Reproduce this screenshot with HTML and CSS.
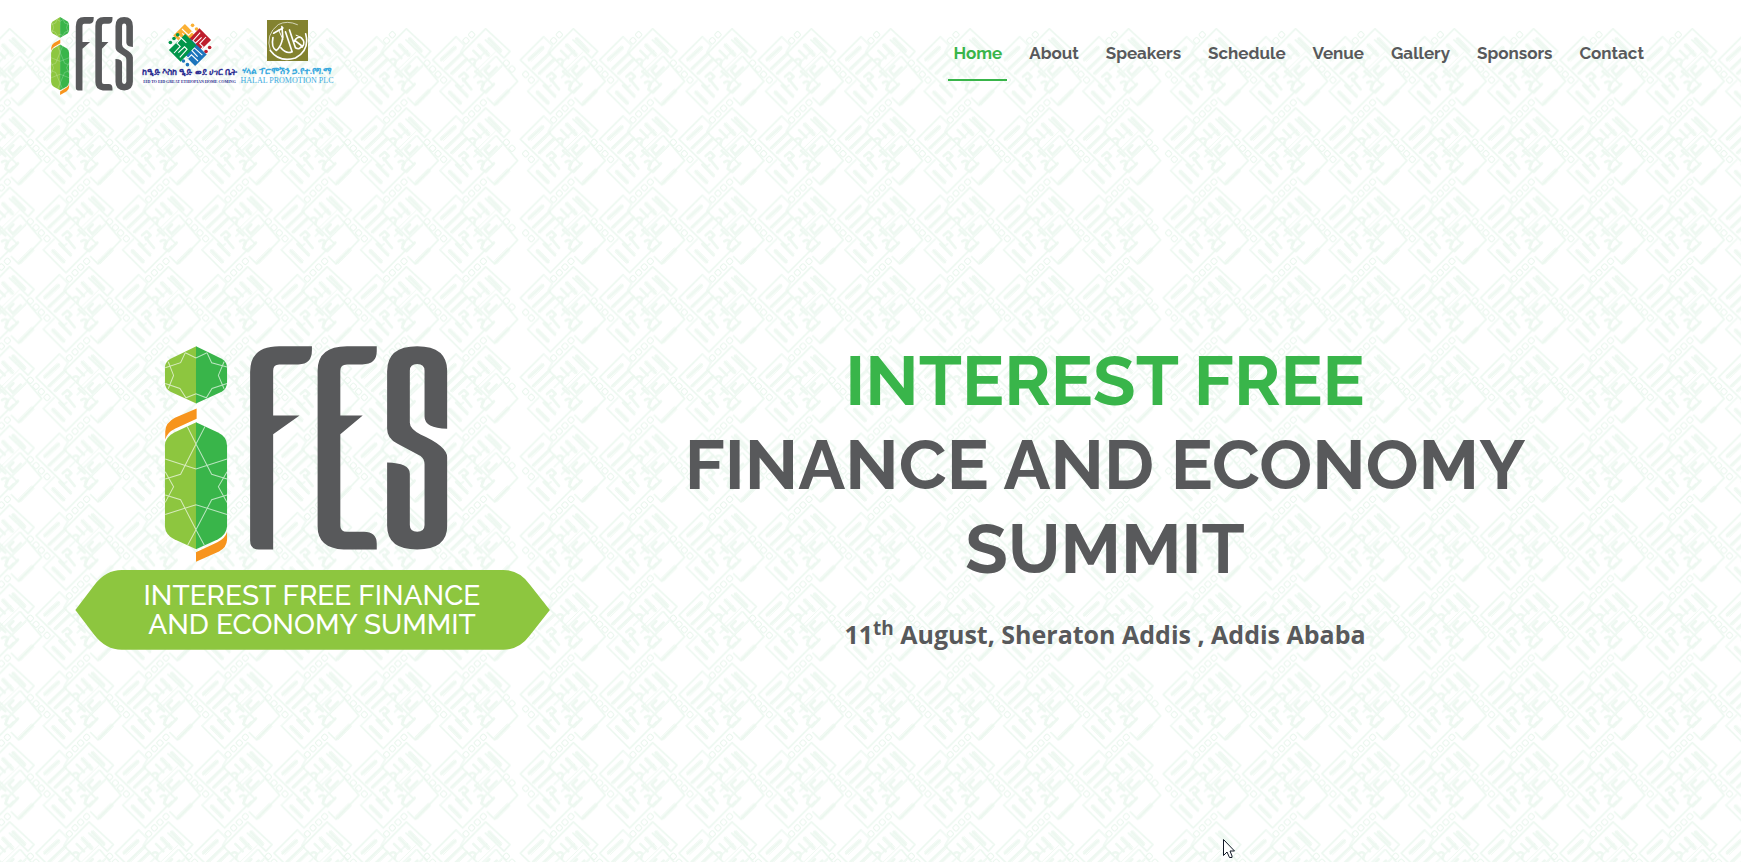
FILE: index.html
```html
<!DOCTYPE html>
<html lang="en">
<head>
<meta charset="utf-8">
<meta name="viewport" content="width=device-width, initial-scale=1">
<title>Interest Free Finance and Economy Summit</title>
<link rel="stylesheet" href="styles.css">
</head>
<body>
<svg class="backdrop" aria-hidden="true">
  <defs>
    <g id="motif" fill="none" stroke-linejoin="round" stroke-linecap="round">
      <g stroke="#f2faf5" stroke-width="6">
        <path d="M74 26L4 96L88 178L96 172M74 26L100 52L88 72M163 2L90 76L186 172M163 2L236 70L218 90L162 36"/>
        <path d="M196 86L259 160L190 232L168 210M26 190L94 258L174 178M26 190L58 158"/>
        <path d="M128 148L192 86M106 126L166 68M150 172L212 112"/>
      </g>
      <g stroke="#eef8f1" stroke-width="8">
        <path d="M72 58L30 96M172 32L208 70M54 192L88 226M232 188L192 228"/>
        <path d="M92 74L42 122M106 92L60 136M142 50L172 82M126 68L148 90M74 172L108 206M94 152L120 184"/>
        <path d="M114 98Q124 88 132 98L128 112M84 146L98 134L110 146L96 158M174 114L160 128L172 142L196 118M140 164Q150 156 158 166L150 184L164 194L188 168M132 130L150 146"/>
      </g>
      <g stroke="#e8f6ec" stroke-width="2">
        <path d="M74 26L4 96L88 178M163 2L90 76L186 172M163 2L236 70L218 90L162 36"/>
        <path d="M196 86L259 160L190 232L168 210M26 190L94 258L174 178"/>
        <path d="M76 62L36 100M68 54L26 92M176 28L212 66M168 36L202 72M58 188L92 222M50 196L84 230M236 192L196 232M228 184L188 224"/>
        <path d="M146 46L176 78M138 54L168 86M130 132L192 72M150 176L212 116M96 78L46 126M110 96L64 140M78 168L112 202"/>
      </g>
      <g stroke="#e9f6ed" stroke-width="3">
        <rect x="-8" y="-8" width="16" height="16" rx="4" transform="translate(121 20) rotate(45)"/>
        <rect x="-8" y="-8" width="16" height="16" rx="4" transform="translate(104 38) rotate(45)"/>
        <rect x="-8" y="-8" width="16" height="16" rx="4" transform="translate(225 105) rotate(45)"/>
        <rect x="-8" y="-8" width="16" height="16" rx="4" transform="translate(242 123) rotate(45)"/>
        <rect x="-8" y="-8" width="16" height="16" rx="4" transform="translate(20 139) rotate(45)"/>
        <rect x="-8" y="-8" width="16" height="16" rx="4" transform="translate(37 156) rotate(45)"/>
        <rect x="-8" y="-8" width="16" height="16" rx="4" transform="translate(156 224) rotate(45)"/>
        <rect x="-8" y="-8" width="16" height="16" rx="4" transform="translate(138 241) rotate(45)"/>
      </g>
    </g>
    <g id="motif-row">
      <use href="#motif"/><use href="#motif" x="238"/><use href="#motif" x="476"/><use href="#motif" x="714"/>
      <use href="#motif" x="952"/><use href="#motif" x="1190"/><use href="#motif" x="1428"/><use href="#motif" x="1666"/>
    </g>
    <pattern id="weave-top" patternUnits="userSpaceOnUse" width="1929" height="238" patternTransform="translate(519 28) scale(.3333)">
      <use href="#motif-row"/>
    </pattern>
    <pattern id="weave" patternUnits="userSpaceOnUse" width="1929" height="238" patternTransform="translate(519 28) scale(.3333)">
      <use href="#motif-row"/><use href="#motif-row" y="-238"/>
    </pattern>
  </defs>
  <rect y="28" width="100%" height="79" fill="url(#weave-top)"/>
  <rect y="107" width="100%" height="100%" fill="url(#weave)"/>
</svg>

<svg class="library" aria-hidden="true">
  <symbol id="ifes" viewBox="314 50 847 647" preserveAspectRatio="none">
    <path fill="#8dc63f" d="M409 51L332 88Q315 98 315 115V160Q315 177 332 187L409 222Z"/>
    <path fill="#39b54a" d="M408 51L485 88Q501 98 501 115V160Q501 177 485 187L408 222Z"/>
    <path fill="#f7941d" d="M410 237V268L345 298Q322 309 316 330V305Q317 280 345 265Z"/>
    <path fill="#8dc63f" d="M409 278L343 309Q315 324 315 348V590Q317 616 343 628L409 658Z"/>
    <path fill="#39b54a" d="M408 278L474 309Q501 322 501 348V590Q499 614 474 628L408 658Z"/>
    <path fill="#f7941d" d="M408 696V667L472 637Q495 627 501 607V630Q500 653 477 665Z"/>
    <g fill="none" stroke="#fff" stroke-opacity=".65" stroke-width="3">
      <path d="M376 70L408 86L441 70M376 70L362 100L316 115M441 70L455 100L501 113M325 97L341 138L325 178M492 97L475 138L492 178M316 162L360 177L378 205L408 193L439 205L456 177L501 162"/>
      <path d="M382 291L408 343L455 434L501 448M435 291L408 343L362 434L316 448M316 388L408 418L501 388M316 426L341 471L316 518M501 426L475 471L501 518M316 496L362 510L408 600L433 646M501 496L455 510L408 600L383 646M316 554L408 525L501 554"/>
    </g>
    <g fill="#58595b">
      <path d="M755 51V63Q755 105 715 105H657Q639 105 639 123V258H718L639 314V659H596Q570 659 570 632V128Q570 51 657 51Z"/>
      <path d="M949 51V66Q949 105 906 105H860Q840 105 840 124V258H907L840 314V588Q840 606 860 606H910Q949 606 949 642V659H850Q772 655 772 590V124Q772 51 860 51Z"/>
      <path d="M1160 298Q1092 296 1092 262V124Q1092 104 1070 104T1048 124V280Q1048 298 1080 315Q1160 350 1160 384V588Q1160 659 1070 659T980 588V399Q1048 401 1048 432V586Q1048 606 1070 606T1092 586V404Q1092 388 1080 379L1010 342Q980 327 980 298V126Q980 51 1070 51T1160 126Z"/>
    </g>
  </symbol>
  <symbol id="eid-block" viewBox="-66 -66 132 132" overflow="visible">
    <path d="M-46 -26L-14 -58L30 -13L-1 17Z"/>
    <circle cx="7" cy="-54" r="5"/><circle cx="18" cy="-44" r="5"/><circle cx="28" cy="-34" r="5"/>
    <path d="M-34 -28L-12 -8L-5 -15L-21 -32M-22 -44L-4 -27L5 -36L19 -24L6 -10" fill="none" stroke="#fff" stroke-width="3"/>
  </symbol>
</svg>

<header class="site-header">
  <a class="brand" href="#home" aria-label="iFES home">
    <svg class="brand-ifes" aria-hidden="true"><use href="#ifes"/></svg>
    <span class="partner partner-eid">
      <svg class="eid-mark" viewBox="-66 -66 132 132" aria-hidden="true">
        <use href="#eid-block" x="-66" y="-66" width="132" height="132" fill="#fbb034"/>
        <g transform="rotate(90)"><use href="#eid-block" x="-66" y="-66" width="132" height="132" fill="#be1e2d"/></g>
        <g transform="rotate(180)"><use href="#eid-block" x="-66" y="-66" width="132" height="132" fill="#1c75bc"/></g>
        <g transform="rotate(270)"><use href="#eid-block" x="-66" y="-66" width="132" height="132" fill="#00964a"/></g>
      </svg>
      <span class="partner-am" lang="am">ከዒድ እስከ ዒድ ወደ ሀገር ቤት</span>
      <span class="partner-en">EID TO EID GREAT ETHIOPIAN HOME COMING</span>
    </span>
    <span class="partner partner-halal">
      <svg class="halal-mark" viewBox="0 0 124 124" aria-hidden="true">
        <rect width="124" height="124" fill="#83822f"/>
        <g fill="none" stroke="#fff" stroke-linecap="round">
          <path stroke-width="5" d="M117 42Q130 92 86 115Q38 130 10 92"/>
          <path stroke-width="2" d="M10 92Q-6 44 34 14Q60 0 92 14"/>
          <path stroke-width="5" d="M18 53Q12 84 28 92Q42 84 48 52L45 20M20 40L48 24M56 36Q66 66 76 96Q58 104 42 84M68 30L86 84Q98 92 105 78L84 62Q92 48 104 54Q118 68 106 82"/>
          <path stroke-width="3" d="M35 30L48 58M88 46L102 52"/>
        </g>
      </svg>
      <span class="partner-am" lang="am">ሃላል ፕሮሞሽን ኃ.የተ.የግ.ማ</span>
      <span class="partner-en">HALAL PROMOTION PLC</span>
    </span>
  </a>
  <nav class="site-nav" aria-label="Main">
    <a class="active" href="#home" aria-current="page">Home</a>
    <a href="#about">About</a>
    <a href="#speakers">Speakers</a>
    <a href="#schedule">Schedule</a>
    <a href="#venue">Venue</a>
    <a href="#gallery">Gallery</a>
    <a href="#sponsors">Sponsors</a>
    <a href="#contact">Contact</a>
  </nav>
</header>

<main class="hero" id="home">
  <svg class="hero-logo" viewBox="46 50 1422 912" role="img" aria-label="iFES Interest Free Finance and Economy Summit">
    <use href="#ifes" x="314" y="50" width="847" height="647"/>
    <path fill="#8dc63f" d="M47 840L104 765Q138 720 186 720H1328Q1376 720 1408 765L1467 840L1408 915Q1376 959 1328 959H186Q138 959 104 915Z"/>
    <g class="ribbon-text">
      <text x="755" y="824">INTEREST FREE FINANCE</text>
      <text x="755" y="912">AND ECONOMY SUMMIT</text>
    </g>
  </svg>
  <div class="hero-text">
    <h1><span>INTEREST FREE</span><br>FINANCE AND ECONOMY SUMMIT</h1>
    <p>11<sup>th</sup> August, Sheraton Addis , Addis Ababa</p>
  </div>
</main>

<svg class="pointer" viewBox="0 0 12 19" aria-hidden="true">
  <path d="M.5 .5V16.500L4 13L6.500 18.500H9L9 17L7 12H11.500Z" fill="#fff" stroke="#111827"/>
</svg>
</body>
</html>
```
FILE: styles.css
```css
* {
  box-sizing: border-box;
}

body {
  margin: 0;
  min-height: 100vh;
  display: flex;
  flex-direction: column;
  position: relative;
  overflow: hidden;
  background: #fff;
  color: #58595b;
  font-family: "Open Sans", sans-serif;
}

.backdrop {
  position: absolute;
  inset: 0;
  width: 100%;
  height: 100%;
  z-index: -1;
}

.library {
  position: absolute;
  width: 0;
  height: 0;
}

.site-header {
  display: flex;
  justify-content: space-between;
  align-items: flex-start;
  padding: 17px 92px 0 51px;
}

.brand {
  display: flex;
  text-decoration: none;
}

.brand-ifes {
  width: 82px;
  height: 78px;
  margin-right: 9px;
}

.partner {
  display: flex;
  flex-direction: column;
  align-items: center;
  white-space: nowrap;
  font-family: "Liberation Serif", serif;
}

.partner-eid {
  width: 95px;
  margin-right: 4px;
  padding-top: 4px;
  color: #2e3192;
}

.partner-halal {
  width: 92px;
  padding-top: 3px;
  color: #3aa9de;
}

.eid-mark {
  width: 48px;
  height: 48px;
  margin-bottom: -2px;
}

.halal-mark {
  width: 41px;
  height: 41px;
  margin-bottom: 5px;
}

.partner-am {
  font-size: 9px;
  line-height: 10px;
  font-weight: 700;
}

.partner-en {
  font-size: 8px;
  line-height: 10px;
}

.partner-eid .partner-en {
  font-size: 4px;
  font-weight: 700;
}

.site-nav {
  display: flex;
  gap: 17px;
  padding-top: 23px;
}

.site-nav a {
  padding: 0 5px 13px;
  border-bottom: 2px solid transparent;
  color: #58595b;
  font: 700 17px/26px Raleway, Lato, sans-serif;
  text-decoration: none;
}

.site-nav .active {
  color: #39b54a;
  border-color: #39b54a;
}

.hero {
  flex: 1;
  display: grid;
  grid-template-columns: 1fr 2fr;
  align-items: center;
  padding: 40px 108px 0 49px;
}

.hero-logo {
  width: 90%;
  justify-self: center;
}

.ribbon-text {
  fill: #fff;
  font-family: Raleway, Lato, sans-serif;
  font-size: 84px;
  font-weight: 500;
  text-anchor: middle;
}

.hero-text {
  text-align: center;
}

h1 {
  margin: 0 0 26px;
  font: 700 70px/84px Raleway, Lato, sans-serif;
}

h1 span {
  color: #39b54a;
}

.hero-text p {
  margin: 0 0 8px;
  font-size: 25px;
  line-height: 36px;
  font-weight: 700;
}

.hero-text sup {
  font-size: 19px;
  line-height: 0;
}

.pointer {
  position: absolute;
  left: 1223px;
  top: 839px;
  width: 12px;
  height: 19px;
}
```
